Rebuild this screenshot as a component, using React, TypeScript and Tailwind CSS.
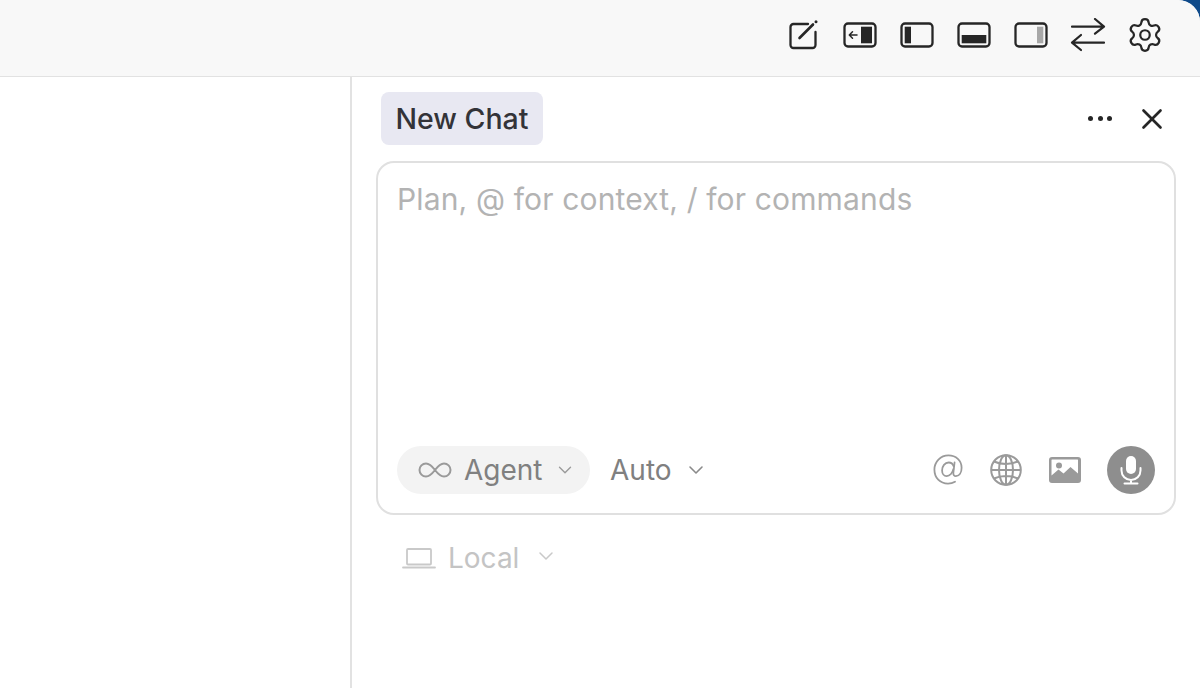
import { ChevronDown, Settings, X } from "lucide-react";

const font = "font-['Inter',sans-serif]";

function ComposeIcon() {
  return (
    <svg width="30" height="30" viewBox="0 0 30 30" fill="none" stroke="#262626" strokeWidth="2.300" strokeLinecap="round">
      <path d="M19 4H4.500a3 3 0 0 0-3 3v18a3 3 0 0 0 3 3h19a3 3 0 0 0 3-3V12" />
      <path d="M10.500 18 24 4.500" strokeWidth="2.600" />
      <circle cx="27" cy="1.800" r="1.500" fill="#262626" stroke="none" />
    </svg>
  );
}

function PanelFrame({ children }: { children: React.ReactNode }) {
  return (
    <svg width="34" height="26" viewBox="0 0 34 26" fill="none">
      <rect x="1.500" y="1.500" width="31" height="23" rx="3.500" stroke="#262626" strokeWidth="2.300" />
      {children}
    </svg>
  );
}

function SwapIcon() {
  return (
    <svg width="36" height="34" viewBox="0 0 36 34" fill="none" stroke="#262626" strokeWidth="2.200" strokeLinecap="round" strokeLinejoin="round">
      <path d="M2 8.700h32M25 1l9 7.700-9 7" />
      <path d="M34 24.700H2M11 17 2 24.700l9 7.300" />
    </svg>
  );
}

function ImageIcon() {
  return (
    <svg width="32" height="26" viewBox="0 0 32 26">
      <path
        fillRule="evenodd"
        fill="#9a9a9a"
        d="M3 0h26a3 3 0 0 1 3 3v20a3 3 0 0 1-3 3H3a3 3 0 0 1-3-3V3a3 3 0 0 1 3-3Zm-.5 3v15.500l7-6 5 4 7-6.500 7.500 6.500V3a.5.5 0 0 0-.5-.5H3a.5.5 0 0 0-.5.5Z"
      />
      <circle cx="10" cy="8.500" r="3" fill="#9a9a9a" />
    </svg>
  );
}

function AtIcon() {
  return (
    <svg width="30" height="32" viewBox="0 0 32 34" fill="none" stroke="#9a9a9a" strokeWidth="1.900" strokeLinecap="round">
      <path d="M23.500 29.500A15 15 0 0 1 16 31.500C7.500 31.500 1.500 25.500 1.500 16.500 1.500 8 8 1.500 16.500 1.500c8 0 14 5.500 14 13 0 5.500-2.500 9-6 9-2 0-3-1.300-2.800-3.500L23 9" />
      <path d="M22 13c-.8-2.500-2.800-4-5.300-4-4 0-7 4-7 8.500 0 3.500 2 6 4.800 6 3.500 0 6.500-3.500 7.200-7.500" />
    </svg>
  );
}

function GlobeIcon() {
  return (
    <svg width="32" height="32" viewBox="0 0 32 32" fill="none" stroke="#9a9a9a" strokeWidth="2">
      <circle cx="16" cy="16" r="14.800" />
      <ellipse cx="16" cy="16" rx="7" ry="14.800" />
      <path d="M16 1.200v29.600M1.200 16h29.600M4 7.500c7 3.300 17 3.300 24 0M4 24.500c7-3.300 17-3.300 24 0" />
    </svg>
  );
}

function LaptopIcon() {
  return (
    <svg width="34" height="22" viewBox="0 0 34 22" fill="none" stroke="#c9c9c9" strokeWidth="1.800" strokeLinecap="round">
      <rect x="5" y="2" width="24" height="15.500" rx="1" />
      <path d="M1 20.500h32" />
    </svg>
  );
}

function InfinityIcon() {
  return (
    <svg width="34" height="18" viewBox="0 0 34 18" fill="none" stroke="#9a9a9a" strokeWidth="2">
      <path d="M17 9c-3-4-5.500-6.500-9-6.500a6.500 6.500 0 0 0 0 13c3.500 0 6-2.500 9-6.500 3-4 5.500-6.500 9-6.500a6.500 6.500 0 0 1 0 13c-3.500 0-6-2.500-9-6.500Z" />
    </svg>
  );
}

function MicIcon() {
  return (
    <svg width="24" height="30" viewBox="0 0 24 30" fill="none" stroke="#fff" strokeWidth="2" strokeLinecap="round">
      <rect x="7" y="1" width="10" height="18" rx="5" fill="#fff" stroke="none" />
      <path d="M2.500 13v2.500a9.500 9.500 0 0 0 19 0V13M12 25v3.500M5.500 28.500h13" />
    </svg>
  );
}

export default function App() {
  return (
    <div className={`h-[688px] w-[1200px] overflow-hidden bg-[#0f4a8a] ${font}`}>
      <div className="flex h-full flex-col overflow-hidden rounded-tr-[22px] bg-white">
        <header className="flex h-[77px] shrink-0 items-center justify-end border-b border-[#e2e2e2] bg-[#f8f8f8] pr-[36px] pb-[6px]">
          <ComposeIcon />
          <div className="ml-[24px] flex gap-[23px]">
            <PanelFrame>
              <rect x="18" y="4.700" width="11" height="16.600" fill="#262626" />
              <path d="M14 13H6.500M9.500 9.800 6.300 13l3.200 3.200" stroke="#262626" strokeWidth="1.500" strokeLinecap="round" strokeLinejoin="round" />
            </PanelFrame>
            <PanelFrame>
              <rect x="4.700" y="4.700" width="6.300" height="16.600" fill="#262626" />
            </PanelFrame>
            <PanelFrame>
              <rect x="4.700" y="13" width="24.600" height="8.300" fill="#262626" />
            </PanelFrame>
            <PanelFrame>
              <rect x="23" y="4.700" width="6.300" height="16.600" fill="#a8a8a8" />
            </PanelFrame>
          </div>
          <div className="ml-[22px]"><SwapIcon /></div>
          <Settings size={38} strokeWidth={1.400} color="#262626" className="mb-[1px] ml-[20px]" />
        </header>

        <div className="flex min-h-0 flex-1">
          <aside className="w-[352px] shrink-0 border-r-2 border-[#e2e2e2]" />
          <main className="flex min-w-0 flex-1 flex-col pt-[15px] pr-[24px] pl-[24px]">
            <div className="flex items-center justify-between pl-[5px]">
              <div className="flex h-[53px] w-[162px] items-center justify-center rounded-[8px] bg-[#e8e8f2] pt-[1px] text-[28.500px] font-medium text-[#333338]">
                New Chat
              </div>
              <div className="flex items-center gap-[23px] pr-[7px]">
                <div className="flex gap-[4.500px]">
                  <span className="size-[5px] rounded-full bg-[#262626]" />
                  <span className="size-[5px] rounded-full bg-[#262626]" />
                  <span className="size-[5px] rounded-full bg-[#262626]" />
                </div>
                <X size={34} strokeWidth={1.900} color="#262626" />
              </div>
            </div>

            <div className="mt-[16px] flex h-[354px] flex-col justify-between rounded-[18px] border-2 border-[#e0e0e0] px-[19px] pt-[17px] pb-[19px]">
              <div className="text-[30px] leading-[38px] tracking-[0.15px] text-[#b3b3b3]">Plan, @ for context, / for commands</div>
              <div className="flex items-center justify-between">
                <div className="flex items-center gap-[20px]">
                  <div className="flex h-[48px] w-[193px] items-center rounded-full bg-[#f3f3f3] pl-[21px] text-[#808080]">
                    <InfinityIcon />
                    <span className="ml-[12px] text-[28px]">Agent</span>
                    <ChevronDown size={22} strokeWidth={1.500} className="ml-[11px] text-[#9a9a9a]" />
                  </div>
                  <div className="flex items-center text-[#808080]">
                    <span className="text-[28px]">Auto</span>
                    <ChevronDown size={24} strokeWidth={1.600} className="ml-[12px] text-[#8a8a8a]" />
                  </div>
                </div>
                <div className="flex items-center">
                  <AtIcon />
                  <div className="ml-[27px]"><GlobeIcon /></div>
                  <div className="ml-[27px]"><ImageIcon /></div>
                  <div className="ml-[26px] flex size-[48px] items-center justify-center rounded-full bg-[#8e8e8e]">
                    <MicIcon />
                  </div>
                </div>
              </div>
            </div>

            <div className="mt-[25px] flex items-center pl-[26px] text-[#c4c4c4]">
              <LaptopIcon />
              <span className="ml-[12px] text-[28px] leading-[36px]">Local</span>
              <ChevronDown size={24} strokeWidth={1.500} className="mb-[4px] ml-[15px] text-[#c9c9c9]" />
            </div>
          </main>
        </div>
      </div>
    </div>
  );
}
